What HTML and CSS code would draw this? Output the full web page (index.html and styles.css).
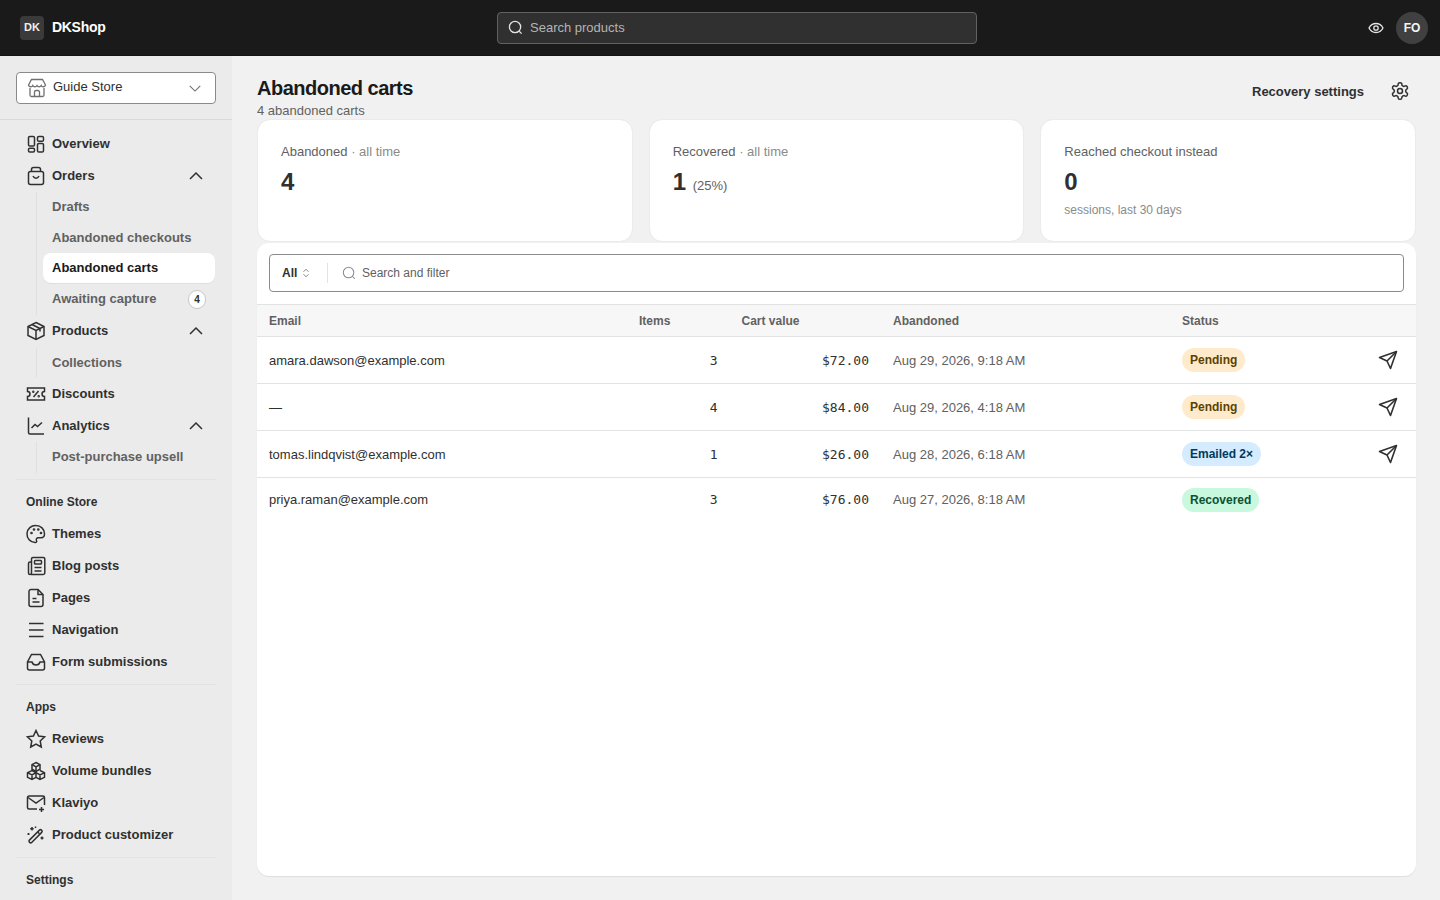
FILE: index.html
```html
<!DOCTYPE html>
<html lang="en">
<head>
<meta charset="utf-8">
<title>Abandoned carts</title>
<link rel="stylesheet" href="styles.css">
</head>
<body>
<svg class="sprite" width="0" height="0">
  <defs>
    <symbol id="i-chev-up" viewBox="0 0 16 16"><path d="M2 11l6-6 6 6"/></symbol>
    <symbol id="i-send" viewBox="0 0 20 20"><path d="M1.500 7.500 18.500 1.500 12.500 18.500 9 11Z"/><path d="M9 11 18.500 1.500"/></symbol>
  </defs>
</svg>
<header class="topbar">
  <div class="brand"><span class="brand-logo">DK</span><span class="brand-name">DKShop</span></div>
  <div class="top-search">
    <svg class="ic-16" viewBox="0 0 16 16"><circle cx="7.500" cy="7.500" r="6"/><path d="M12 12l2.500 2.500"/></svg>
    <span>Search products</span>
  </div>
  <div class="top-actions">
    <svg class="ic-eye" viewBox="0 0 16 16"><path d="M1 8c1.500-3 4-4.500 7-4.500S13.500 5 15 8c-1.500 3-4 4.500-7 4.500S2.500 11 1 8Z"/><circle cx="8" cy="8" r="2.200"/></svg>
    <span class="avatar">FO</span>
  </div>
</header>
<div class="shell">
  <aside class="sidebar">
    <div class="store-wrap">
      <button class="store">
        <svg class="ic-store" viewBox="0 0 20 20"><path d="M4.500 1.500h11L18.500 7a2.300 2.300 0 0 1-4.300.5 2.400 2.400 0 0 1-4.200 0 2.400 2.400 0 0 1-4.200 0A2.300 2.300 0 0 1 1.500 7Z"/><path d="M3 10v7a1.500 1.500 0 0 0 1.500 1.500h11A1.500 1.500 0 0 0 17 17v-7"/><path d="M7.500 18.500V14a1.500 1.500 0 0 1 1.500-1.500h2a1.500 1.500 0 0 1 1.500 1.500v4.500"/></svg>
        <span class="store-name">Guide Store</span>
        <svg class="ic-chev-down" viewBox="0 0 16 16"><path d="M2 5.500l6 6 6-6"/></svg>
      </button>
    </div>
    <nav class="nav">
      <a class="nav-item"><svg class="ic" viewBox="0 0 20 20"><rect x="2.500" y="2.500" width="6" height="9.500" rx="1.300"/><rect x="11.500" y="2.500" width="6" height="4.800" rx="1.300"/><rect x="2.500" y="14.300" width="6" height="3.700" rx="1.300"/><rect x="11.500" y="9.500" width="6" height="8.500" rx="1.300"/></svg>Overview</a>
      <a class="nav-item"><svg class="ic" viewBox="0 0 20 20"><path d="M5.500 6V3.500A2 2 0 0 1 7.500 1.500h5a2 2 0 0 1 2 2V6"/><rect x="2.500" y="5.500" width="15" height="13" rx="2"/><path d="M7 10c.7 1.500 1.800 2.200 3 2.200s2.300-.7 3-2.200"/></svg>Orders<svg class="chev" viewBox="0 0 16 16"><use href="#i-chev-up"/></svg></a>
      <div class="sub sub-first">
        <a class="sub-item">Drafts</a>
        <a class="sub-item">Abandoned checkouts</a>
        <a class="sub-item active">Abandoned carts</a>
        <a class="sub-item">Awaiting capture<span class="count">4</span></a>
      </div>
      <a class="nav-item"><svg class="ic" viewBox="0 0 20 20"><path d="M10 1.500 18 5.500v9L10 18.500 2 14.500v-9Z"/><path d="M2 5.500l8 4 8-4M10 9.500v9M6 3.500l8 4v3"/></svg>Products<svg class="chev" viewBox="0 0 16 16"><use href="#i-chev-up"/></svg></a>
      <div class="sub sub-mid"><a class="sub-item">Collections</a></div>
      <a class="nav-item"><svg class="ic" viewBox="0 0 20 20"><path d="M1.500 4h17v3.500a2.500 2.500 0 0 0 0 5V16h-17v-3.500a2.500 2.500 0 0 0 0-5Z"/><path d="M7.500 13l5-6"/><circle cx="7.300" cy="7.800" r=".5"/><circle cx="12.700" cy="12.200" r=".5"/></svg>Discounts</a>
      <a class="nav-item"><svg class="ic" viewBox="0 0 20 20"><path d="M2.500 1.500V16.500a1.500 1.500 0 0 0 1.500 1.500H18"/><path d="M5.500 12l3.500-3.500 2.500 2L16 6.500"/></svg>Analytics<svg class="chev" viewBox="0 0 16 16"><use href="#i-chev-up"/></svg></a>
      <div class="sub sub-end"><a class="sub-item">Post-purchase upsell</a></div>
      <div class="section">
        <div class="section-title">Online Store</div>
        <a class="nav-item"><svg class="ic" viewBox="0 0 20 20"><path d="M10 1.500a8.500 8.500 0 0 0-1 17c1.500.2 2-1 1.500-2-.7-1.300.2-2.700 1.800-2.700H15c2 0 3.500-1.300 3.500-4C18.500 5 14.700 1.500 10 1.500Z"/><circle cx="5.500" cy="9" r=".6"/><circle cx="8" cy="5.500" r=".6"/><circle cx="12.300" cy="5.500" r=".6"/><circle cx="15" cy="9" r=".6"/></svg>Themes</a>
        <a class="nav-item"><svg class="ic" viewBox="0 0 20 20"><path d="M5 18.500h12a1.800 1.800 0 0 0 1.800-1.800V3a1.500 1.500 0 0 0-1.500-1.500H7A1.500 1.500 0 0 0 5.500 3v14a1.500 1.500 0 0 1-3 0V7.500A1.500 1.500 0 0 1 4 6h1.500"/><rect x="8.500" y="4.500" width="7" height="3.500" rx=".8"/><path d="M8.500 11.500h7M8.500 15h7"/></svg>Blog posts</a>
        <a class="nav-item"><svg class="ic" viewBox="0 0 20 20"><path d="M3 3.500A2 2 0 0 1 5 1.500h7L17 6.500v10a2 2 0 0 1-2 2H5a2 2 0 0 1-2-2Z"/><path d="M12 1.500v5h5M6.500 10.500h4M6.500 14h7"/></svg>Pages</a>
        <a class="nav-item"><svg class="ic" viewBox="0 0 20 20"><path d="M3 3.500h14.500M3 10h14.500M3 16.500h14.500"/></svg>Navigation</a>
        <a class="nav-item"><svg class="ic" viewBox="0 0 20 20"><path d="M5.500 2.500h9L18.500 10v6a2 2 0 0 1-2 2h-13a2 2 0 0 1-2-2v-6Z"/><path d="M1.500 10H6c.5 2 2 3 4 3s3.500-1 4-3h4.500"/></svg>Form submissions</a>
      </div>
      <div class="section">
        <div class="section-title">Apps</div>
        <a class="nav-item"><svg class="ic" viewBox="0 0 20 20"><path d="M10 1.500l2.600 5.500 6 .8-4.400 4.200 1.100 6L10 15l-5.300 3 1.100-6L1.400 7.800l6-.8Z"/></svg>Reviews</a>
        <a class="nav-item"><svg class="ic" viewBox="0 0 20 20"><path d="M10 1.500l4 2.200v4.500l-4 2.200-4-2.200V3.700Z"/><path d="M6 3.700l4 2.200 4-2.200M10 5.900v4.500"/><path d="M6 9.500l4 2.200v4.600l-4 2.200-4.500-2.200v-4.600ZM14 9.500l4.500 2.200v4.600L14 18.500l-4-2.200M1.500 11.700 6 14l4-2.300 4 2.300 4.500-2.300M6 14v4.500M14 14v4.500"/></svg>Volume bundles</a>
        <a class="nav-item"><svg class="ic" viewBox="0 0 20 20"><path d="M11 16H3a1.500 1.500 0 0 1-1.500-1.500v-10A1.500 1.500 0 0 1 3 3h14a1.500 1.500 0 0 1 1.500 1.500V12"/><path d="M2 4.500l8 5.500 8-5.500M15.500 14v5M13 16.500h5"/></svg>Klaviyo</a>
        <a class="nav-item"><svg class="ic" viewBox="0 0 20 20"><rect x="-1.300" y="-8" width="3.200" height="17" rx="1.400" transform="translate(9.700 10.700) rotate(45)"/><path d="M11.500 6.800l2 2M6 2v3.500M4.200 3.700h3.500M2.500 8v2M1.500 9h2M16 11.500v3M14.500 13h3M9.500 1.500v1.500M8.800 2.200h1.500"/></svg>Product customizer</a>
      </div>
      <div class="section">
        <div class="section-title">Settings</div>
      </div>
    </nav>
  </aside>
  <main class="main">
    <div class="page-head">
      <div>
        <h1>Abandoned carts</h1>
        <p class="subtitle">4 abandoned carts</p>
      </div>
      <div class="head-actions">
        <span class="link-btn">Recovery settings</span>
        <svg class="ic-gear" viewBox="0 0 24 24"><path d="M12.220 2h-.44a2 2 0 0 0-2 2v.18a2 2 0 0 1-1 1.730l-.43.25a2 2 0 0 1-2 0l-.15-.08a2 2 0 0 0-2.730.73l-.22.38a2 2 0 0 0 .73 2.730l.15.1a2 2 0 0 1 1 1.720v.51a2 2 0 0 1-1 1.740l-.15.09a2 2 0 0 0-.73 2.730l.22.38a2 2 0 0 0 2.730.73l.15-.08a2 2 0 0 1 2 0l.43.25a2 2 0 0 1 1 1.730V20a2 2 0 0 0 2 2h.44a2 2 0 0 0 2-2v-.18a2 2 0 0 1 1-1.730l.43-.25a2 2 0 0 1 2 0l.15.08a2 2 0 0 0 2.730-.73l.22-.39a2 2 0 0 0-.73-2.730l-.15-.08a2 2 0 0 1-1-1.740v-.5a2 2 0 0 1 1-1.740l.15-.09a2 2 0 0 0 .73-2.730l-.22-.38a2 2 0 0 0-2.730-.73l-.15.08a2 2 0 0 1-2 0l-.43-.25a2 2 0 0 1-1-1.730V4a2 2 0 0 0-2-2z"/><circle cx="12" cy="12" r="3"/></svg>
      </div>
    </div>
    <section class="stats">
      <div class="stat">
        <div class="stat-label">Abandoned <span class="muted">· all time</span></div>
        <div class="stat-value">4</div>
      </div>
      <div class="stat">
        <div class="stat-label">Recovered <span class="muted">· all time</span></div>
        <div class="stat-value">1 <span class="stat-pct">(25%)</span></div>
      </div>
      <div class="stat">
        <div class="stat-label">Reached checkout instead</div>
        <div class="stat-value">0</div>
        <div class="stat-note">sessions, last 30 days</div>
      </div>
    </section>
    <section class="table-card">
      <div class="filter-wrap">
        <div class="filter">
          <span class="filter-all">All<svg class="ic-sort" viewBox="0 0 8 12"><path d="M1 4.500 4 1.500l3 3M1 7.500l3 3 3-3"/></svg></span>
          <span class="filter-search"><svg class="ic-14" viewBox="0 0 16 16"><circle cx="7.500" cy="7.500" r="6"/><path d="M12 12l2.500 2.500"/></svg>Search and filter</span>
        </div>
      </div>
      <table class="tbl">
        <thead>
          <tr><th class="c-email">Email</th><th class="c-items">Items</th><th class="c-value">Cart value</th><th class="c-date">Abandoned</th><th class="c-status">Status</th><th class="c-act"></th></tr>
        </thead>
        <tbody>
          <tr><td>amara.dawson@example.com</td><td class="num">3</td><td class="num">$72.00</td><td class="date">Aug 29, 2026, 9:18 AM</td><td><span class="pill pending">Pending</span></td><td class="act"><svg class="ic-send" viewBox="0 0 20 20"><use href="#i-send"/></svg></td></tr>
          <tr><td>—</td><td class="num">4</td><td class="num">$84.00</td><td class="date">Aug 29, 2026, 4:18 AM</td><td><span class="pill pending">Pending</span></td><td class="act"><svg class="ic-send" viewBox="0 0 20 20"><use href="#i-send"/></svg></td></tr>
          <tr><td>tomas.lindqvist@example.com</td><td class="num">1</td><td class="num">$26.00</td><td class="date">Aug 28, 2026, 6:18 AM</td><td><span class="pill emailed">Emailed 2×</span></td><td class="act"><svg class="ic-send" viewBox="0 0 20 20"><use href="#i-send"/></svg></td></tr>
          <tr class="short"><td>priya.raman@example.com</td><td class="num">3</td><td class="num">$76.00</td><td class="date">Aug 27, 2026, 8:18 AM</td><td><span class="pill recovered">Recovered</span></td><td class="act"></td></tr>
        </tbody>
      </table>
    </section>
  </main>
</div>
</body>
</html>
```

FILE: styles.css
```css
* { box-sizing: border-box; }
html, body { margin: 0; height: 100%; }
body {
  height: 900px;
  overflow: hidden;
  font-family: "Liberation Sans", Arial, sans-serif;
  font-size: 13px;
  color: #303030;
  background: #f1f1f1;
  display: flex;
  flex-direction: column;
}
.sprite { position: absolute; }
svg { fill: none; stroke: currentColor; flex: none; }

/* top bar */
.topbar {
  height: 56px;
  flex: none;
  background: #1a1a1a;
  border-bottom: 1px solid #141414;
  display: grid;
  grid-template-columns: 477px 480px 1fr;
  align-items: center;
  padding: 0 12px 0 20px;
  color: #fff;
}
.brand { display: flex; align-items: center; gap: 8px; }
.brand-logo {
  width: 24px; height: 24px;
  border-radius: 4px;
  background: #3a3a3a;
  padding-bottom: 1px;
  display: flex; align-items: center; justify-content: center;
  font-size: 11px; font-weight: 700; color: #f0f0f0;
}
.brand-name { font-size: 14px; line-height: 16px; padding-bottom: 1px; font-weight: 700; letter-spacing: -0.3px; }
.top-search {
  height: 32px;
  border: 1px solid #616161;
  border-radius: 4px;
  background: #303030;
  display: flex; align-items: center; gap: 7px;
  padding: 0 10px;
  color: #b5b5b5;
  font-size: 13px;
}
.ic-16 { width: 15px; height: 15px; stroke: #e3e3e3; stroke-width: 1.4; }
.top-actions { display: flex; justify-content: flex-end; align-items: center; gap: 12px; }
.ic-eye { width: 16px; height: 16px; stroke: #e3e3e3; stroke-width: 1.3; }
.avatar {
  width: 32px; height: 32px;
  border-radius: 50%;
  background: #404040;
  display: flex; align-items: center; justify-content: center;
  font-size: 12px; font-weight: 700; color: #f5f5f5;
}

.shell { flex: 1; display: flex; min-height: 0; }

/* sidebar */
.sidebar { width: 232px; flex: none; background: #ebebeb; overflow: hidden; }
.store-wrap { padding: 16px 16px 15px; border-bottom: 1px solid #d9d9d9; }
.store {
  width: 200px; height: 32px;
  display: flex; align-items: center;
  padding: 0 13px 1px 10px;
  background: #fff;
  border: 1px solid #8a8a8a;
  border-radius: 4px;
  font: inherit;
  font-size: 13px;
  color: #303030;
}
.ic-store { width: 20px; height: 20px; stroke: #707070; stroke-width: 1.3; }
.store-name { margin-left: 6px; margin-bottom: 2px; flex: 1; text-align: left; }
.ic-chev-down { width: 14px; height: 14px; stroke: #707070; stroke-width: 1.3; }
.nav { padding: 7.500px 16px 0; }
.nav-item {
  height: 32px;
  display: flex; align-items: center; gap: 6px;
  padding-left: 10px;
  font-weight: 700;
  font-size: 13px;
  color: #303030;
}
.ic { width: 20px; height: 20px; stroke: #303030; stroke-width: 1.5; }
.chev { width: 16px; height: 16px; margin-left: auto; margin-right: 12px; stroke: #303030; stroke-width: 1.5; }
.sub { margin-left: 20px; margin-right: 1px; border-left: 1px solid #e0e0e0; padding-left: 6px; }
.sub-first { padding-bottom: .600px; }
.sub-mid { margin-top: .900px; }
.sub-mid .sub-item { margin-bottom: 0; }
.sub-end { padding-bottom: .500px; }
.sub-item {
  height: 30px;
  display: flex; align-items: center;
  padding-left: 9px;
  margin-bottom: .670px;
  font-weight: 700;
  font-size: 13px;
  color: #616161;
  border-radius: 8px;
}
.sub-item.active {
  background: #fff;
  color: #1a1a1a;
  box-shadow: 0 1px 0 rgba(0,0,0,.05);
}
.count {
  margin: 2px 9px 0 auto;
  width: 18px; height: 19px;
  border-radius: 10px;
  background: #fff;
  border: 1px solid #c8c8c8;
  display: flex; align-items: center; justify-content: center;
  font-size: 10px;
  color: #303030;
}
.section { margin-top: 6.500px; border-top: 1px solid #e3e3e3; padding-top: 5.500px; }
.section-title {
  height: 32px;
  display: flex; align-items: center;
  padding-left: 10px;
  font-size: 12px;
  font-weight: 700;
  color: #303030;
}

/* main */
.main { flex: 1; min-width: 0; padding: 20px 24px 24px 25px; display: flex; flex-direction: column; }
.page-head { display: flex; justify-content: space-between; align-items: flex-start; }
h1 { margin: 0; font-size: 20px; line-height: 24px; font-weight: 700; color: #1a1a1a; letter-spacing: -0.5px; }
.subtitle { margin: 2px 0 0; font-size: 13px; line-height: 18px; color: #616161; height: 18px; }
.head-actions { display: flex; align-items: center; margin-top: 5px; gap: 26px; padding-right: 6px; }
.link-btn { font-weight: 700; font-size: 13px; color: #303030; }
.ic-gear { width: 20px; height: 20px; stroke: #303030; stroke-width: 1.800; }
.stats { display: grid; grid-template-columns: repeat(3, 1fr); gap: 16px; height: 123px; margin-top: -1px; flex: none; }
.stat {
  background: #fff;
  background-clip: padding-box;
  border: 1px solid #ebebeb;
  border-radius: 13px;
  padding: 24px 23px 0;
}
.stat-label { font-size: 13px; line-height: 16px; color: #616161; }
.muted { color: #8a8a8a; }
.stat-value { margin-top: 8px; font-size: 24px; line-height: 28px; font-weight: 700; color: #303030; }
.stat-pct { font-size: 13px; font-weight: 400; color: #616161; }
.stat-note { margin-top: 6px; font-size: 12px; line-height: 16px; color: #8a8a8a; }

.table-card {
  flex: 1;
  margin-top: 1px;
  background: #fff;
  border-radius: 12px;
  box-shadow: 0 1px 1px rgba(0,0,0,.08);
  overflow: hidden;
}
.filter-wrap { padding: 11px 12px 12px; }
.filter {
  height: 38px;
  border: 1px solid #8a8a8a;
  border-radius: 4px;
  display: flex; align-items: center;
}
.filter-all {
  width: 58px;
  height: 20px;
  padding-left: 12px;
  display: flex; align-items: center; gap: 5px;
  font-size: 12px; font-weight: 700; color: #303030;
  border-right: 1px solid #e3e3e3;
}
.ic-sort { width: 8px; height: 10px; stroke: #707070; stroke-width: 1; }
.filter-search {
  padding-left: 14px;
  display: flex; align-items: center; gap: 6px;
  font-size: 12px; color: #616161;
}
.ic-14 { width: 14px; height: 14px; stroke: #8a8a8a; stroke-width: 1.2; }

.tbl { width: 100%; border-collapse: collapse; table-layout: fixed; }
.tbl th {
  height: 32px;
  background: #f7f7f7;
  border-top: 1px solid #e3e3e3;
  border-bottom: 1px solid #e3e3e3;
  padding: 0 12px;
  text-align: left;
  font-size: 12px;
  font-weight: 700;
  color: #616161;
}
.c-email { width: 370px; }
.c-items { width: 102.500px; }
.c-value { width: 151.500px; }
.c-date { width: 289px; }
.c-status { width: 170px; }
.tbl td {
  height: 47px;
  padding: 0 12px;
  border-bottom: 1px solid #e3e3e3;
  font-size: 13px;
  color: #303030;
}
.tbl tr.short td { height: 44px; border-bottom: 0; }
.tbl td.num {
  text-align: right;
  font-family: "DejaVu Sans Mono", monospace;
  font-size: 13px;
}
.tbl td.date { color: #616161; }
.tbl td.act { padding: 3px 18px 0 0; text-align: right; }
.ic-send { width: 20px; height: 20px; stroke: #303030; stroke-width: 1.6; stroke-linejoin: round; }
.pill {
  display: inline-flex; align-items: center;
  height: 24px;
  padding: 0 8px;
  border-radius: 12px;
  font-size: 12px;
  font-weight: 700;
}
.pending { background: #ffebcc; color: #5c4200; }
.emailed { background: #d5ebff; color: #003a5a; }
.recovered { background: #c8f8dd; color: #0c5132; }
```
